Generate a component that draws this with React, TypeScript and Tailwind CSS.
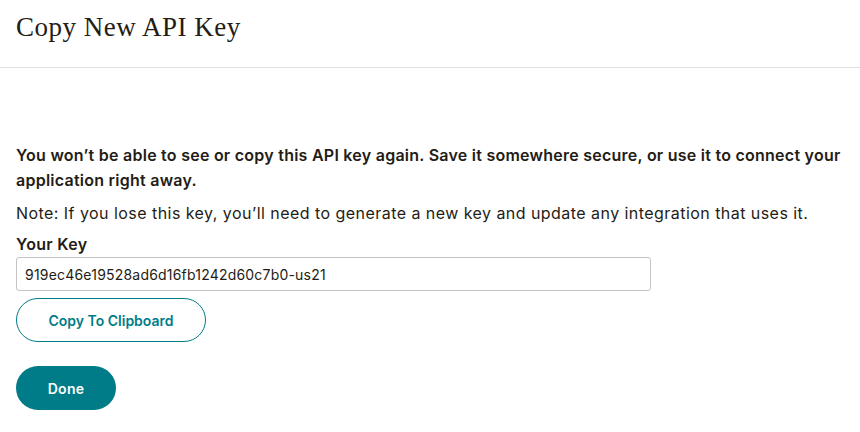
export default function App() {
  return (
    <div className="w-[860px] h-[432px] bg-white text-[#241c15] overflow-hidden" style={{ fontFamily: 'Inter, "Liberation Sans", Arial, sans-serif' }}>
      <div className="h-[68px] border-b border-[#e0e0e0] px-4 pt-[9px]">
        <h1 className="text-[27px] leading-[36px] tracking-[0.5px] text-[#241c15]" style={{ fontFamily: '"Liberation Serif", "Times New Roman", serif' }}>Copy New API Key</h1>
      </div>
      <div className="px-4 pt-[75px]">
        <p className="text-[16px] font-semibold leading-[25px] tracking-[0.25px]">You won’t be able to see or copy this API key again. Save it somewhere secure, or use it to connect your application right away.</p>
        <p className="text-[16px] leading-[25px] mt-[8px] tracking-[0.45px]">Note: If you lose this key, you’ll need to generate a new key and update any integration that uses it.</p>
        <label className="block text-[16px] font-semibold leading-[20px] mt-[8px] tracking-[0.3px]">Your Key</label>
        <div className="mt-[3px] w-[635px] h-[34px] border border-[#c4c4c4] rounded-[3px] flex items-center px-[8px] text-[14px] tracking-[0.2px]">919ec46e19528ad6d16fb1242d60c7b0-us21</div>
        <button className="mt-[7px] w-[190px] h-[44px] rounded-full border border-[#007c89] text-[#007c89] text-[14px] font-semibold flex items-center justify-center">Copy To Clipboard</button>
        <button className="mt-[24px] w-[100px] h-[44px] rounded-full bg-[#007c89] text-white text-[14px] font-semibold tracking-[0.3px] flex items-center justify-center">Done</button>
      </div>
    </div>
  );
}
